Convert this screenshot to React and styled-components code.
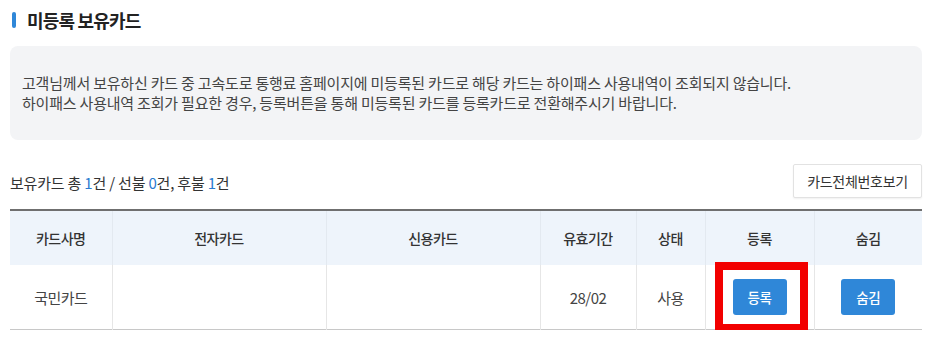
import React from 'react';
import styled, { createGlobalStyle } from "styled-components";

const GlobalStyle = createGlobalStyle`
  body {
    margin: 0;
    background: #fff;
    font-family: "Noto Sans CJK KR", "Noto Sans", sans-serif;
    color: #333;
  }
`;

const Page = styled.div`
  padding: 8px 8px 0 10px;
`;

const TitleRow = styled.div`
  display: flex;
  align-items: center;
  height: 24px;
  gap: 11px;
  padding-left: 2px;
`;

const TitleBar = styled.span`
  width: 4px;
  height: 16px;
  border-radius: 2px;
  background: #2f87d8;
`;

const Title = styled.h2`
  margin: 0;
  font-size: 18px;
  font-weight: 700;
  letter-spacing: -0.8px;
  color: #222;
`;

const InfoBox = styled.div`
  margin-top: 14px;
  background: #f3f4f6;
  border-radius: 8px;
  padding: 27px 12px;
  font-size: 15px;
  line-height: 20px;
  letter-spacing: -0.2px;
  color: #444;
`;

const CountRow = styled.div`
  display: flex;
  align-items: center;
  justify-content: space-between;
  margin-top: 24px;
`;

const CountText = styled.div`
  font-size: 15px;
  letter-spacing: -0.2px;
  color: #333;
  margin-top: 2px;
`;

const Num = styled.span`
  color: #2a7bd0;
`;

const OutlineButton = styled.button`
  height: 34px;
  width: 129px;
  border: 1px solid #e2e2e2;
  border-radius: 2px;
  background: #fff;
  box-shadow: 0 1px 2px rgba(0, 0, 0, 0.06);
  font-family: inherit;
  font-size: 14px;
  letter-spacing: -0.3px;
  color: #333;
`;

const Table = styled.table`
  margin-top: 11px;
  width: 100%;
  border-collapse: collapse;
  border-top: 2px solid #6f6f6f;
  border-bottom: 1px solid #c8c8c8;
`;

const Th = styled.th`
  height: 54px;
  padding: 0;
  background: #eef4fb;
  font-size: 14px;
  font-weight: 500;
  letter-spacing: -0.5px;
  color: #333;
  border-left: 1px solid #e3e9f0;
  &:first-child { border-left: none; }
`;

const Td = styled.td`
  position: relative;
  height: 64px;
  padding: 0;
  text-align: center;
  font-size: 15px;
  letter-spacing: -0.5px;
  color: #444;
  border-left: 1px solid #e6e6e6;
  &:first-child { border-left: none; }
`;

const BlueButton = styled.button`
  width: 54px;
  height: 36px;
  border: none;
  border-radius: 3px;
  background: #2f87d8;
  color: #fff;
  font-family: inherit;
  font-size: 13.5px;
  font-weight: 500;
  letter-spacing: -0.3px;
`;

const Highlight = styled.span`
  position: absolute;
  left: 9px;
  right: 6px;
  top: -3px;
  bottom: -3px;
  border: 8px solid #f20000;
  pointer-events: none;
`;

const cols = [102, 214, 214, 96, 69, 109, 108];

function App() {
  return (
    <Page>
      <GlobalStyle />
      <TitleRow>
        <TitleBar />
        <Title>미등록 보유카드</Title>
      </TitleRow>
      <InfoBox>
        고객님께서 보유하신 카드 중 고속도로 통행료 홈페이지에 미등록된 카드로 해당 카드는 하이패스 사용내역이 조회되지 않습니다.
        <br />
        하이패스 사용내역 조회가 필요한 경우, 등록버튼을 통해 미등록된 카드를 등록카드로 전환해주시기 바랍니다.
      </InfoBox>
      <CountRow>
        <CountText>
          보유카드 총 <Num>1</Num>건 / 선불 <Num>0</Num>건, 후불 <Num>1</Num>건
        </CountText>
        <OutlineButton>카드전체번호보기</OutlineButton>
      </CountRow>
      <Table>
        <colgroup>
          {cols.map((w, i) => <col key={i} style={{ width: w }} />)}
        </colgroup>
        <thead>
          <tr>
            <Th>카드사명</Th>
            <Th>전자카드</Th>
            <Th>신용카드</Th>
            <Th>유효기간</Th>
            <Th>상태</Th>
            <Th>등록</Th>
            <Th>숨김</Th>
          </tr>
        </thead>
        <tbody>
          <tr>
            <Td>국민카드</Td>
            <Td></Td>
            <Td></Td>
            <Td>28/02</Td>
            <Td>사용</Td>
            <Td>
              <BlueButton>등록</BlueButton>
              <Highlight />
            </Td>
            <Td><BlueButton>숨김</BlueButton></Td>
          </tr>
        </tbody>
      </Table>
    </Page>
  );
}

export default App;
